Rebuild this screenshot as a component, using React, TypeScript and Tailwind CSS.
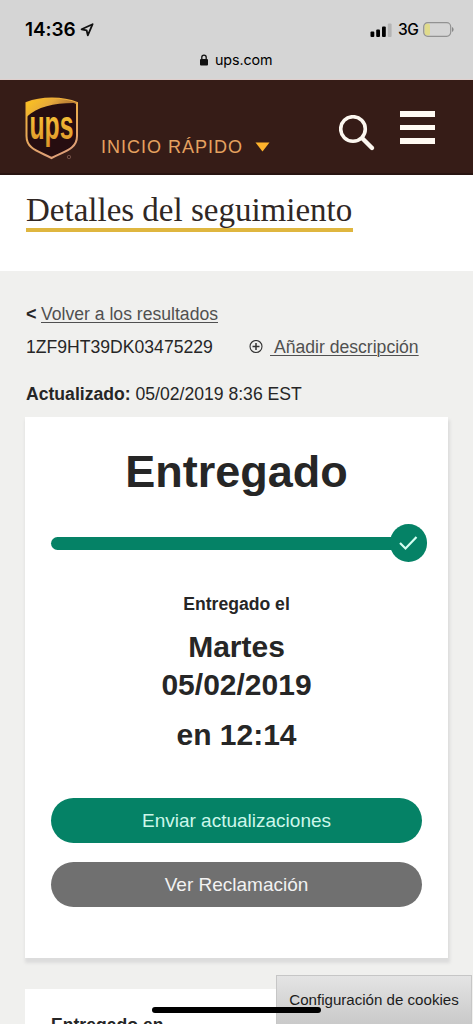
import type { ReactNode } from 'react';

function StatusBar() {
  return (
    <div className="h-[80px] bg-[#d5d5d5] border-b border-[#dfcfcc] text-black font-['Inter',sans-serif]">
      <div className="flex items-center justify-between h-[58px] pl-[25px] pr-[18px] pt-[1px]">
        <div className="flex items-center gap-[4px]">
          <span className="text-[19px] font-semibold leading-none tracking-[-0.1px]">14:36</span>
          <svg width="14" height="14" viewBox="0 0 14 14" fill="none">
            <path d="M12.6 1.2 1.6 6.3 6.6 7.3 7.8 12.3Z" stroke="#111" strokeWidth="1.8" strokeLinejoin="round" />
          </svg>
        </div>
        <div className="flex items-center">
          <svg width="22" height="14" viewBox="0 0 22 14">
            <rect x="0.5" y="8.5" width="3.8" height="5.5" rx="1" fill="#000" />
            <rect x="6.2" y="6.5" width="3.8" height="7.5" rx="1" fill="#000" />
            <rect x="12" y="3.6" width="3.8" height="10.4" rx="1" fill="#000" />
            <rect x="17.8" y="0.5" width="3.8" height="13.5" rx="1" fill="#b4b4b4" />
          </svg>
          <span className="ml-[6px] w-[20px] text-[15.5px] font-medium leading-none tracking-[-0.5px]">3G</span>
          <svg className="ml-[5px]" width="32" height="15" viewBox="0 0 32 15">
            <rect x="1.5" y="1.5" width="5.5" height="12" rx="2" fill="#e0db8c" />
            <rect x="0.7" y="0.7" width="27" height="13.6" rx="4" fill="none" stroke="#929292" strokeWidth="1.2" />
            <path d="M29.2 5c1.7.7 1.7 4.3 0 5Z" fill="#777" />
          </svg>
        </div>
      </div>
      <div className="flex items-center pl-[199px] -mt-[6px] h-[16px]">
        <svg width="10" height="12" viewBox="0 0 10 12">
          <path d="M2.8 6V3.3a2.2 2.2 0 0 1 4.4 0V6" fill="none" stroke="#111" strokeWidth="1.3" />
          <rect x="1" y="5" width="8" height="6.5" rx="1" fill="#111" />
        </svg>
        <span className="ml-[6px] text-[14.3px] leading-none tracking-[-0.1px]">ups.com</span>
      </div>
    </div>
  );
}

function Logo() {
  return (
    <svg className="overflow-visible" width="54" height="64" viewBox="0 0 54 64">
      <defs>
        <linearGradient id="shield" x1="0" y1="0" x2="1" y2="0.4">
          <stop offset="0" stopColor="#ffc61a" />
          <stop offset="0.5" stopColor="#e6a83c" />
          <stop offset="1" stopColor="#9c6230" />
        </linearGradient>
        <linearGradient id="rim" x1="0" y1="0" x2="0.3" y2="1">
          <stop offset="0" stopColor="#f5b52c" />
          <stop offset="1" stopColor="#dfa077" />
        </linearGradient>
        <linearGradient id="letters" x1="0" y1="0" x2="0" y2="1">
          <stop offset="0" stopColor="#ffcf3d" />
          <stop offset="1" stopColor="#dc9428" />
        </linearGradient>
      </defs>
      <path d="M1.500 6C16 0 38 0 52 6V39C52 52 40 54 26.500 61C13 54 1.500 52 1.500 39Z" fill="#260d10" stroke="url(#rim)" strokeWidth="2" />
      <path d="M1.500 6C16 0 38 0 52 6 31 5.500 13 9 1.500 20Z" fill="url(#shield)" />
      <text x="4.500" y="42" textLength="44" lengthAdjust="spacingAndGlyphs" fontFamily="Liberation Sans, sans-serif" fontSize="40" fontWeight="700" fill="url(#letters)">
        ups
      </text>
      <circle cx="44" cy="60" r="1.7" fill="none" stroke="#805b50" strokeWidth="0.8" />
    </svg>
  );
}

function NavBar() {
  return (
    <header className="flex h-[95px] bg-[#361c17] border-b-2 border-[#281411]">
      <div className="ml-[25px] mt-[17px]">
        <Logo />
      </div>
      <button className="flex items-center ml-[22px] mt-[55px] h-[24px] text-[18px] text-[#e6a260] tracking-[1px] whitespace-nowrap">
        INICIO RÁPIDO
        <svg className="ml-[12px]" width="15" height="10" viewBox="0 0 15 10">
          <path d="M0.500 0.500H14.500L7.500 9.500Z" fill="#ffb32c" />
        </svg>
      </button>
      <div className="flex ml-auto mr-[38px]">
        <svg className="mt-[35px]" width="37" height="37" viewBox="0 0 37 37" fill="none" stroke="#fcf7f0" strokeLinecap="round">
          <circle cx="14" cy="14" r="12.300" strokeWidth="3.600" />
          <path d="M23.500 23.500 33 33" strokeWidth="4.400" />
        </svg>
        <div className="flex flex-col gap-[8px] mt-[31px] ml-[24px]">
          <span className="w-[35px] h-[5.5px] bg-[#fffaf3]" />
          <span className="w-[35px] h-[5.5px] bg-[#fffaf3]" />
          <span className="w-[35px] h-[5.5px] bg-[#fffaf3]" />
        </div>
      </div>
    </header>
  );
}

function PillButton({ color, children }: { color: string; children: ReactNode }) {
  return (
    <button className={`block w-[371px] h-[45px] pt-[2px] rounded-full text-[19px] ${color}`}>{children}</button>
  );
}

function TrackingInfo() {
  return (
    <div className="pl-[26px] pt-[31px] text-[17.6px] leading-[24px] text-[#262626]">
      <div className="flex h-[24px]">
        <b className="w-[15px] text-[18px]">&lt;</b>
        <a className="text-[#505050] underline underline-offset-[2px] decoration-1 whitespace-nowrap">Volver a los resultados</a>
      </div>
      <div className="flex items-center mt-[9px] h-[24px]">
        <span className="w-[223px]">1ZF9HT39DK03475229</span>
        <svg width="15" height="15" viewBox="0 0 15 15" fill="none" stroke="#333">
          <circle cx="7" cy="6.500" r="6" strokeWidth="1.100" />
          <path d="M3.500 6.500h7M7 3v7" strokeWidth="1.500" />
        </svg>
        <a className="ml-[6px] text-[#505050] underline underline-offset-[2px] decoration-1 whitespace-pre"> Añadir descripción</a>
      </div>
      <p className="mt-[23px]">
        <b>Actualizado:</b> 05/02/2019 8:36 EST
      </p>
    </div>
  );
}

function DeliveryCard() {
  return (
    <section className="mt-[11px] ml-[25px] w-[423px] h-[541px] bg-white text-[#262626] font-bold text-center shadow-[1px_4px_3px_1px_#dcdcdc]">
      <h2 className="pt-[29px] text-[45px] leading-[52px]">Entregado</h2>
      <div className="flex items-center ml-[26px] mt-[26px] h-[38px]">
        <div className="w-[344px] h-[13px] rounded-l-full bg-[#058266]" />
        <div className="flex items-center justify-center w-[37px] h-[38px] -ml-[5px] rounded-full bg-[#058266]">
          <svg width="21" height="17" viewBox="0 0 21 17" fill="none">
            <path d="M2 8 7.500 13.500 18.500 2" stroke="#d5fff2" strokeWidth="2.200" />
          </svg>
        </div>
      </div>
      <p className="mt-[30px] text-[17.6px] leading-[24px]">Entregado el</p>
      <p className="mt-[12px] text-[30px] leading-[38px]">
        Martes
        <br />
        05/02/2019
      </p>
      <p className="mt-[12px] text-[30px] leading-[38px]">en 12:14</p>
      <div className="flex flex-col gap-[19px] ml-[26px] mt-[44px] font-normal">
        <PillButton color="bg-[#058266] text-[#ccf7ea]">Enviar actualizaciones</PillButton>
        <PillButton color="bg-[#707070] text-[#f2f2f2]">Ver Reclamación</PillButton>
      </div>
    </section>
  );
}

export default function App() {
  return (
    <div className="relative w-[473px] h-[1024px] overflow-hidden bg-[#f0f0ee] font-['Liberation_Sans',Arial,sans-serif]">
      <StatusBar />
      <NavBar />
      <div className="h-[96px] bg-white pl-[26px] pt-[15px]">
        <h1 className="inline-block w-[327px] h-[42px] border-b-4 border-[#dfb63f] font-['Liberation_Serif',serif] text-[33px] leading-[40px] text-[#302724] whitespace-nowrap">
          Detalles del seguimiento
        </h1>
      </div>
      <TrackingInfo />
      <DeliveryCard />
      <section className="mt-[31px] ml-[25px] w-[423px] h-[100px] bg-white pl-[26px] pt-[24px] text-[17.6px] leading-[24px] font-bold text-[#262626]">
        Entregado en
      </section>

      <button className="absolute left-[276px] top-[975px] w-[196px] h-[60px] pb-[9px] border border-[#c6c6c6] bg-linear-to-b from-[#e4e4e4] to-[#c4c4c4] text-[15.1px] text-[#1c1c1c] whitespace-nowrap">
        Configuración de cookies
      </button>
      <div className="absolute left-[152px] top-[1007px] w-[169px] h-[6px] rounded-full bg-black" />
    </div>
  );
}
